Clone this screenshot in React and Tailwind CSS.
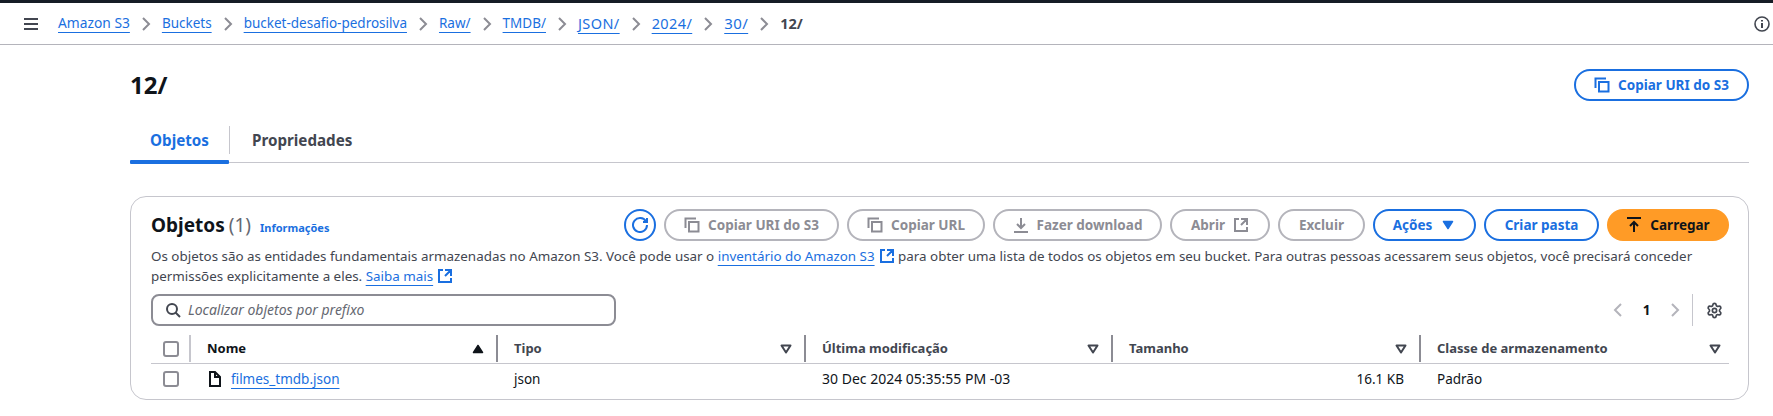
import React from 'react';
import { Settings } from 'lucide-react';

const crumbs = [
  { name: 'Amazon S3', size: 'text-[13.8px]' },
  { name: 'Buckets', size: '' },
  { name: 'bucket-desafio-pedrosilva', size: '' },
  { name: 'Raw/', size: '' },
  { name: 'TMDB/', size: '' },
  { name: 'JSON/', size: 'text-[14.5px] tracking-[0.4px]' },
  { name: '2024/', size: 'text-[14.5px] tracking-[0.4px]' },
  { name: '30/', size: 'text-[15px] tracking-[0.4px]' },
];

const linkClass = 'text-[#1a6fe0] underline underline-offset-[4px] decoration-1 [text-decoration-skip-ink:none]';

const Icon = ({ children, className = '' }) => (
  <svg
    viewBox="0 0 16 16"
    fill="none"
    stroke="currentColor"
    strokeWidth="2"
    className={`w-4 h-4 shrink-0 ${className}`}
  >
    {children}
  </svg>
);

const CopyIcon = () => (
  <Icon>
    <path d="M1.5 11V1.5H12" />
    <rect x="5" y="5" width="9.5" height="9.5" />
  </Icon>
);

const ExternalIcon = ({ className }) => (
  <Icon className={className}>
    <path d="M14 8V2H8M14 2 8 8M6 2H2v12h12v-4" />
  </Icon>
);

const Chevron = () => (
  <svg viewBox="0 0 16 16" fill="none" stroke="#8c8c94" strokeWidth="2" className="w-4 h-4 mx-2 shrink-0">
    <path d="m5 2 6 6-6 6" />
  </svg>
);

const Button = ({ children, disabled, className = '' }) => (
  <button
    className={`h-8 flex items-center justify-center gap-2 rounded-full border-2 bg-white text-[13.5px] font-bold ${
      disabled ? 'border-[#b4b4bb] text-[#8c8c94]' : 'border-[#1a6fe0] text-[#1a6fe0]'
    } ${className}`}
  >
    {children}
  </button>
);

const FilterIcon = () => (
  <svg viewBox="0 0 16 16" className="w-4 h-4 shrink-0" fill="none" stroke="#424650" strokeWidth="2">
    <path d="M3.5 4.5h9L8 11.5z" strokeLinejoin="round" />
  </svg>
);

const HeaderCell = ({ label, icon, dark }) => (
  <div className="flex items-center h-[27px] border-r-2 border-[#8c8c94] pl-4 pr-[10px] justify-between last:border-r-0 last:pr-[6px]">
    <span className={`text-[13px] font-bold ${dark ? 'text-[#0f141a]' : 'text-[#424650]'}`}>{label}</span>
    {icon}
  </div>
);

const Check = () => <div className="w-4 h-4 rounded-[3px] border-2 border-[#8c8c94] bg-white" />;

export default function App() {
  return (
    <div className="w-[1773px] h-[416px] bg-white overflow-hidden font-['Noto_Sans',sans-serif] text-[13.5px] text-[#0f141a]">
      <div className="h-[3px] bg-[#161d26]" />

      {/* Breadcrumbs */}
      <div className="h-[42px] flex items-center border-b border-[#b4b4bb] pl-6 pr-[3px]">
        <svg viewBox="0 0 16 16" className="w-4 h-4 text-[#424650] -ml-[1px]" fill="none" stroke="currentColor" strokeWidth="2">
          <path d="M1 3h14M1 8h14M1 13h14" />
        </svg>
        <div className="flex items-center ml-[19px]">
          {crumbs.map((c) => (
            <React.Fragment key={c.name}>
              <a className={`${linkClass} ${c.size}`}>{c.name}</a>
              <Chevron />
            </React.Fragment>
          ))}
          <span className="font-bold text-[14.5px] text-[#424650]">12/</span>
        </div>
        <svg viewBox="0 0 16 16" className="w-4 h-4 ml-auto text-[#424650]" fill="none" stroke="currentColor" strokeWidth="1.6">
          <circle cx="8" cy="8" r="7" />
          <path d="M8 7v5M8 4v1.6" strokeWidth="2" />
        </svg>
      </div>

      <div className="ml-[130px] mr-6">
        {/* Title */}
        <div className="flex items-center justify-between mt-6">
          <h1 className="text-2xl leading-8 font-bold">12/</h1>
          <Button className="w-[175px]">
            <CopyIcon />
            Copiar URI do S3
          </Button>
        </div>

        {/* Tabs */}
        <div className="flex h-[38px] mt-6 border-b border-[#c6c6cd] items-start">
          <div className="relative w-[99px] h-[38px] flex justify-center pt-[3px] text-[15.2px] leading-6 font-bold text-[#1a6fe0]">
            Objetos
            <div className="absolute left-0 right-0 -bottom-[1px] h-1 rounded-[1px] bg-[#1a6fe0]" />
          </div>
          <div className="h-7 mt-[1px] flex items-center border-l border-[#c6c6cd] pl-[22px] text-[15.2px] font-bold text-[#424650]">
            Propriedades
          </div>
        </div>

        {/* Objects card */}
        <div className="mt-[33px] h-[204px] w-[1619px] rounded-2xl border border-[#c6c6cd] pt-3 pl-5 pr-[19px]">
          <div className="flex items-center justify-between h-8">
            <div className="flex items-baseline">
              <span className="text-[19px] font-bold">Objetos</span>
              <span className="text-[19px] text-[#656871] ml-1">(1)</span>
              <span className="text-[11px] font-bold text-[#1a6fe0] ml-[9px]">Informações</span>
            </div>
            <div className="flex items-center gap-2">
              <button className="w-8 h-8 flex items-center justify-center rounded-full border-2 border-[#1a6fe0] text-[#1a6fe0]">
                <Icon>
                  <path d="M15 8a7 7 0 1 1-1-3.6" />
                  <path d="M15 1v4h-4" />
                </Icon>
              </button>
              <Button disabled className="w-[175px]">
                <CopyIcon />
                Copiar URI do S3
              </Button>
              <Button disabled className="w-[138px]">
                <CopyIcon />
                Copiar URL
              </Button>
              <Button disabled className="w-[169px]">
                <Icon>
                  <path d="M1 15h14M8 1v10M4 7l4 4 4-4" />
                </Icon>
                Fazer download
              </Button>
              <Button disabled className="w-[100px]">
                Abrir
                <ExternalIcon />
              </Button>
              <Button disabled className="w-[87px]">Excluir</Button>
              <Button className="w-[103px]">
                Ações
                <svg viewBox="0 0 16 16" className="w-4 h-4" fill="currentColor" stroke="currentColor" strokeWidth="1.5">
                  <path d="M3.5 4.5h9L8 11.5z" strokeLinejoin="round" />
                </svg>
              </Button>
              <Button className="w-[115px]">Criar pasta</Button>
              <button className="w-[122px] h-8 flex items-center justify-center gap-2 rounded-full bg-[#ff9b26] text-[13.5px] font-bold text-[#0f141a]">
                <Icon>
                  <path d="M1 1h14M8 15V5M4 9l4-4 4 4" />
                </Icon>
                Carregar
              </button>
            </div>
          </div>

          <p className="mt-[5px] text-[13.4px] leading-5 text-[#424650] whitespace-nowrap">
            Os objetos são as entidades fundamentais armazenadas no Amazon S3. Você pode usar o{' '}
            <a className={linkClass}>inventário do Amazon S3</a>
            <ExternalIcon className="inline-block text-[#1a6fe0] ml-1 -mt-[3px]" /> para obter uma lista de todos os objetos em seu bucket. Para outras pessoas acessarem seus objetos, você precisará conceder
            <br />
            permissões explicitamente a eles.{' '}
            <a className={linkClass}>Saiba mais</a>
            <ExternalIcon className="inline-block text-[#1a6fe0] ml-1 -mt-[3px]" />
          </p>

          {/* Search and pagination */}
          <div className="flex items-center justify-between mt-2 h-8">
            <div className="w-[465px] h-8 flex items-center rounded-lg border-2 border-[#8c8c94] pl-3">
              <Icon className="text-[#424650]">
                <circle cx="7" cy="7" r="5" />
                <path d="m15 15-4.5-4.5" />
              </Icon>
              <span className="ml-[7px] text-sm italic text-[#656871]">Localizar objetos por prefixo</span>
            </div>
            <div className="flex items-center h-8 pr-[6px]">
              <svg viewBox="0 0 16 16" className="w-4 h-4 text-[#b4b4bb]" fill="none" stroke="currentColor" strokeWidth="2">
                <path d="m11 2-6 6 6 6" />
              </svg>
              <span className="w-[41px] text-center font-bold">1</span>
              <svg viewBox="0 0 16 16" className="w-4 h-4 text-[#b4b4bb]" fill="none" stroke="currentColor" strokeWidth="2">
                <path d="m5 2 6 6-6 6" />
              </svg>
              <div className="h-8 border-l border-[#c6c6cd] ml-[9px] pl-[13px] flex items-center">
                <Settings size={17} strokeWidth={2.4} className="text-[#424650]" />
              </div>
            </div>
          </div>

          {/* Table */}
          <div className="mt-2 w-[1578px]">
            <div className="grid grid-cols-[40px_307px_308px_307px_308px_1fr] items-center h-[29px] border-b border-[#c6c6cd] box-content">
              <div className="flex items-center h-[27px] pl-3 border-r-2 border-[#c6c6cd]">
                <Check />
              </div>
              <HeaderCell
                label="Nome"
                dark
                icon={
                  <svg viewBox="0 0 16 16" className="w-4 h-4" fill="#0f141a" stroke="#0f141a" strokeWidth="1.5">
                    <path d="M3.5 11.5h9L8 4.5z" strokeLinejoin="round" />
                  </svg>
                }
              />
              <HeaderCell label="Tipo" icon={<FilterIcon />} />
              <HeaderCell label="Última modificação" icon={<FilterIcon />} />
              <HeaderCell label="Tamanho" icon={<FilterIcon />} />
              <HeaderCell label="Classe de armazenamento" icon={<FilterIcon />} />
            </div>
            <div className="grid grid-cols-[40px_307px_308px_307px_308px_1fr] items-center h-[30px]">
              <div className="pl-3">
                <Check />
              </div>
              <div className="flex items-center pl-4">
                <svg viewBox="0 0 16 16" className="w-4 h-4 text-[#0f141a]" fill="none" stroke="currentColor" strokeWidth="2">
                  <path d="M13 15H3V1h5l5 5z" />
                  <path d="M8 1v5h5" />
                </svg>
                <a className={`ml-2 ${linkClass}`}>filmes_tmdb.json</a>
              </div>
              <div className="pl-4">json</div>
              <div className="pl-4 text-sm">30 Dec 2024 05:35:55 PM -03</div>
              <div className="text-right pr-[17px]">16.1 KB</div>
              <div className="pl-4">Padrão</div>
            </div>
          </div>
        </div>
      </div>
    </div>
  );
}
